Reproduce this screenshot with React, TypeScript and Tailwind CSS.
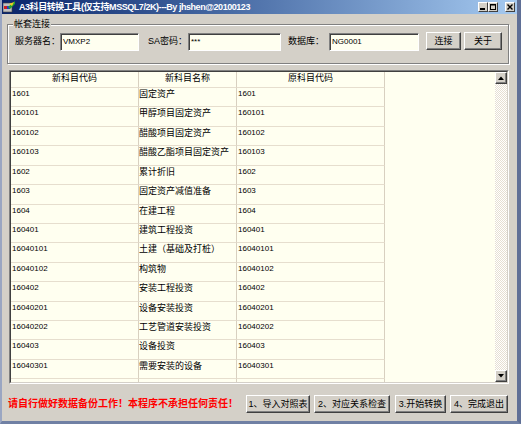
import React from "react";

const F = "font-['Liberation_Sans','Noto_Sans_CJK_SC',sans-serif]";

const rows: [string, string, string][] = [
  ["1601", "固定资产", "1601"],
  ["160101", "甲醇项目固定资产", "160101"],
  ["160102", "醋酸项目固定资产", "160102"],
  ["160103", "醋酸乙酯项目固定资产", "160103"],
  ["1602", "累计折旧", "1602"],
  ["1603", "固定资产减值准备", "1603"],
  ["1604", "在建工程", "1604"],
  ["160401", "建筑工程投资", "160401"],
  ["16040101", "土建（基础及打桩）", "16040101"],
  ["16040102", "构筑物", "16040102"],
  ["160402", "安装工程投资", "160402"],
  ["16040201", "设备安装投资", "16040201"],
  ["16040202", "工艺管道安装投资", "16040202"],
  ["160403", "设备投资", "160403"],
  ["16040301", "需要安装的设备", "16040301"],
];

function Btn({ children, className }: { children: React.ReactNode; className: string }) {
  return (
    <div
      className={`flex items-center justify-center h-[18px] bg-[#d4d0c8] border border-t-white border-l-white border-b-[#404040] border-r-[#404040] shadow-[inset_-1px_-1px_0_#808080] text-[9px] leading-[12px] text-black whitespace-nowrap ${className}`}
    >
      {children}
    </div>
  );
}

function Field({ value, className }: { value: string; className: string }) {
  return (
    <div
      className={`mt-[1px] h-[18px] border border-t-[#808080] border-l-[#808080] border-b-white border-r-white shadow-[inset_1px_1px_0_#404040] bg-[#fffff0] flex items-center pl-[2px] text-[8px] text-black ${className}`}
    >
      {value}
    </div>
  );
}

function CapBtn({ children }: { children: React.ReactNode }) {
  return (
    <div className="w-[10px] h-[10px] bg-[#d4d0c8] border border-t-white border-l-white border-b-[#404040] border-r-[#404040] flex items-center justify-center">
      {children}
    </div>
  );
}

export default function App() {
  return (
    <div className={`w-[521px] h-[424px] flex flex-col bg-[#d4d0c8] border-l-2 border-l-[#9aa6c2] border-r-4 border-r-[#5f6f96] border-b-[3px] border-b-[#7080a4] ${F} text-black overflow-hidden`}>
      {/* Title bar */}
      <div className="h-[14px] shrink-0 flex items-center bg-gradient-to-r from-[#0a246a] to-[#a6caf0] pr-[2px]">
        <svg width="13" height="12" viewBox="0 0 13 12" className="ml-[1px] shrink-0">
          <rect x="0" y="2" width="9" height="9" fill="#c0c0c0" stroke="#404040" strokeWidth="0.6" />
          <rect x="1" y="5" width="3" height="3" fill="#d02020" />
          <rect x="4" y="5" width="3" height="3" fill="#2040c0" />
          <path d="M5 6 L12 0 L12 3 L7 8 Z" fill="#20a030" />
          <path d="M6 3 L11 1 L9 5 Z" fill="#f0d020" />
        </svg>
        <span className="ml-[3px] text-[9px] leading-[12px] font-bold text-white whitespace-nowrap tracking-[-0.45px]">
          A3科目转换工具(仅支持MSSQL7/2K)---By jhshen@20100123
        </span>
        <div className="ml-auto flex items-center">
          <CapBtn>
            <svg width="6" height="6" viewBox="0 0 6 6"><rect x="0" y="4" width="5" height="2" fill="#000" /></svg>
          </CapBtn>
          <CapBtn>
            <svg width="6" height="6" viewBox="0 0 6 6"><rect x="0.5" y="0.5" width="5" height="5" fill="none" stroke="#000" strokeWidth="1" /><rect x="0" y="0" width="6" height="1.5" fill="#000" /></svg>
          </CapBtn>
          <div className="w-[7px]" />
          <CapBtn>
            <svg width="6" height="6" viewBox="0 0 6 6"><path d="M0.5 0.5 L5.5 5.5 M5.5 0.5 L0.5 5.5" stroke="#000" strokeWidth="1.4" /></svg>
          </CapBtn>
        </div>
      </div>

      {/* Group box */}
      <div className="relative ml-[5px] mt-[10px] w-[502px] h-[40px] shrink-0 border border-[#808080] shadow-[inset_1px_1px_0_#ffffff,1px_1px_0_#ffffff]">
        <span className="absolute left-[5px] -top-[7px] px-[1px] bg-[#d4d0c8] text-[9px] leading-[12px]">帐套连接</span>
        <div className="flex items-start pt-[7px] pl-[7px]">
          <div className="w-[45px] h-[18px] mt-[1px] flex items-center text-[9px] whitespace-nowrap">服务器名：</div>
          <Field value="VMXP2" className="w-[79px]" />
          <div className="ml-[9px] w-[40px] h-[18px] mt-[1px] flex items-center text-[9px] whitespace-nowrap">SA密码：</div>
          <Field value="***" className="w-[93px]" />
          <div className="ml-[7px] w-[41px] h-[18px] mt-[1px] flex items-center text-[9px] whitespace-nowrap">数据库：</div>
          <Field value="NG0001" className="w-[90px]" />
          <Btn className="ml-[7px] w-[35px]">连接</Btn>
          <Btn className="ml-[3px] w-[38px]">关于</Btn>
        </div>
      </div>

      {/* Grid */}
      <div className="ml-[7px] mt-[6px] w-[500px] h-[314px] shrink-0 border border-t-[#808080] border-l-[#808080] border-b-white border-r-white">
        <div className="w-full h-full border border-t-[#404040] border-l-[#404040] border-b-[#d4d0c8] border-r-[#d4d0c8] bg-[#fffff0] flex">
          <div className="flex-1 flex flex-col">
            <div className="h-[16px] flex text-[9px] leading-[13px]">
              <div className="w-[128px] border-r border-r-[#d8d0c0] border-b border-b-[#e6dece] text-center">新科目代码</div>
              <div className="w-[98px] border-r border-r-[#d8d0c0] border-b border-b-[#e6dece] text-center">新科目名称</div>
              <div className="w-[148px] border-r border-r-[#d8d0c0] border-b border-b-[#e6dece] text-center">原科目代码</div>
            </div>
            {rows.map((r, i) => (
              <div key={i} className="h-[19.43px] flex">
                <div className="w-[128px] border-r border-r-[#d8d0c0] border-b border-b-[#e6dece] pl-[1px] text-[8px] leading-[12px]">{r[0]}</div>
                <div className="w-[98px] border-r border-r-[#d8d0c0] border-b border-b-[#e6dece] text-[9px] leading-[12px] whitespace-nowrap overflow-hidden">{r[1]}</div>
                <div className="w-[148px] border-r border-r-[#d8d0c0] border-b border-b-[#e6dece] pl-[1px] text-[8px] leading-[12px]">{r[2]}</div>
              </div>
            ))}
            <div className="flex-1 flex">
              <div className="w-[128px] border-r border-r-[#d8d0c0]" />
              <div className="w-[98px] border-r border-r-[#d8d0c0]" />
              <div className="w-[148px] border-r border-r-[#d8d0c0]" />
            </div>
          </div>
          <div className="w-[12px] flex flex-col">
            <div className="h-[12px] bg-[#d4d0c8] border border-t-white border-l-white border-b-[#404040] border-r-[#404040] shadow-[inset_-1px_-1px_0_#808080] flex items-center justify-center">
              <svg width="6" height="4" viewBox="0 0 6 4"><path d="M0 4 L3 0.5 L6 4 Z" fill="#000" /></svg>
            </div>
            <div className="flex-1 bg-[repeating-conic-gradient(#e6dfd2_0_25%,#ffffff_0_50%)] bg-[length:2px_2px]" />
            <div className="h-[12px] bg-[#d4d0c8] border border-t-white border-l-white border-b-[#404040] border-r-[#404040] shadow-[inset_-1px_-1px_0_#808080] flex items-center justify-center">
              <svg width="6" height="4" viewBox="0 0 6 4"><path d="M0 0 L3 3.5 L6 0 Z" fill="#000" /></svg>
            </div>
          </div>
        </div>
      </div>

      {/* Bottom bar */}
      <div className="mt-[11px] h-[18px] shrink-0 flex items-center">
        <div className="w-[244px] pl-[6px] text-[10px] leading-[14px] font-bold text-[#ff0000] whitespace-nowrap">
          请自行做好数据备份工作！本程序不承担任何责任！
        </div>
        <Btn className="w-[64px]">1、导入对照表</Btn>
        <Btn className="ml-[4px] w-[76px]">2、对应关系检查</Btn>
        <Btn className="ml-[5px] w-[51px]">3.开始转换</Btn>
        <Btn className="ml-[4px] w-[58px]">4、完成退出</Btn>
      </div>
    </div>
  );
}
